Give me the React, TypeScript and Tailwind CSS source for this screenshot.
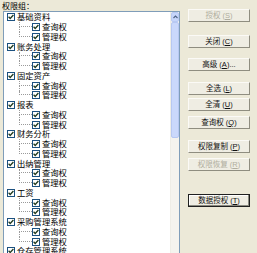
import React from "react";

const groups = [
  "基础资料",
  "账务处理",
  "固定资产",
  "报表",
  "财务分析",
  "出纳管理",
  "工资",
  "采购管理系统",
  "仓存管理系统",
];

const buttons = [
  { label: "授权", key: "S", mt: "mt-0", disabled: true },
  { label: "关闭", key: "C", mt: "mt-[13px]" },
  { label: "高级", key: "A", mt: "mt-[10px]", dots: true },
  { label: "全选", key: "L", mt: "mt-[11px]" },
  { label: "全清", key: "U", mt: "mt-[3px]" },
  { label: "查询权", key: "Q", mt: "mt-[5px]" },
  { label: "权限复制", key: "P", mt: "mt-[11px]" },
  { label: "权限恢复", key: "R", mt: "mt-[5px]", disabled: true },
  { label: "数据授权", key: "T", mt: "mt-[23px]", primary: true },
];

const font = { fontFamily: '"Liberation Sans", "Noto Sans CJK SC", sans-serif' };

const Check = () => (
  <span className="w-[8px] h-[8px] border border-[#1C5180] bg-white flex items-center justify-center shrink-0">
    <svg width="6" height="6" viewBox="0 0 6 6">
      <path d="M0.6 2.8 L2.2 4.5 L5.4 1" fill="none" stroke="#1f3a1f" strokeWidth="1.3" />
    </svg>
  </span>
);

const Child = ({ text, last }: { text: string; last?: boolean }) => (
  <div className="flex items-center h-[9.75px]">
    <div className="w-[15px] shrink-0" />
    <div className="w-[13px] h-full flex flex-col shrink-0">
      <div className="h-1/2 border-l border-b border-dotted border-[#9a9a9a]" />
      <div className={last ? "h-1/2" : "h-1/2 border-l border-dotted border-[#9a9a9a]"} />
    </div>
    <Check />
    <span className="ml-[2px] text-[8.3px] leading-none text-black">{text}</span>
  </div>
);

export default function App() {
  return (
    <div
      className="w-[257px] h-[253px] overflow-hidden bg-[#ECE9D8] flex"
      style={font}
    >
      <div className="w-[181px] shrink-0 flex flex-col">
        <div className="h-[16px] pl-[2px] pt-[3px] text-[8px] leading-none text-black">权限组：</div>
        <div className="ml-[3px] w-[177px] h-[260px] border border-[#7F9DB9] bg-white flex">
          <div className="flex-1 pt-[0.6px] overflow-hidden">
            {groups.map((g) => (
              <div key={g}>
                <div className="flex items-center h-[9.75px] pl-[3px]">
                  <Check />
                  <span className="ml-[2px] text-[8.3px] leading-none text-black whitespace-nowrap">{g}</span>
                </div>
                <Child text="查询权" />
                <Child text="管理权" last />
              </div>
            ))}
          </div>
          <div className="w-[9px] flex flex-col bg-[#F4F3EE] border-l border-[#EEEDE6]">
            <div className="h-[10px] bg-[#C6D5FA] border border-[#B8C9F2] rounded-[2px] flex items-center justify-center">
              <svg width="5" height="4" viewBox="0 0 5 4">
                <path d="M0.5 3 L2.5 1 L4.5 3" fill="none" stroke="#4D6185" strokeWidth="1.1" />
              </svg>
            </div>
            <div className="h-[116px] bg-[#CAD8FB] border border-[#B7C8F2] rounded-[2px]" />
          </div>
        </div>
      </div>
      <div className="ml-[7px] w-[62px] pt-[9px] flex flex-col">
        {buttons.map((b) => (
          <div
            key={b.label}
            className={
              b.mt +
              " h-[13px] flex items-center justify-center text-[7.5px] leading-none " +
              (b.primary
                ? "border border-[#202020] bg-[#EFEDE3] shadow-[inset_-1px_-1px_0_#8a8a80,inset_1px_1px_0_#ffffff]"
                : "border border-t-[#fbfaf6] border-l-[#fbfaf6] border-r-[#8f8d80] border-b-[#8f8d80] bg-[#EFEDE3]") +
              (b.disabled ? " text-[#B0AD9E]" : " text-[#111]")
            }
          >
            <span>{b.label}</span>
            <span className="ml-[2px]">(<span className="underline">{b.key}</span>)</span>
            {b.dots && <span>...</span>}
          </div>
        ))}
      </div>
    </div>
  );
}
